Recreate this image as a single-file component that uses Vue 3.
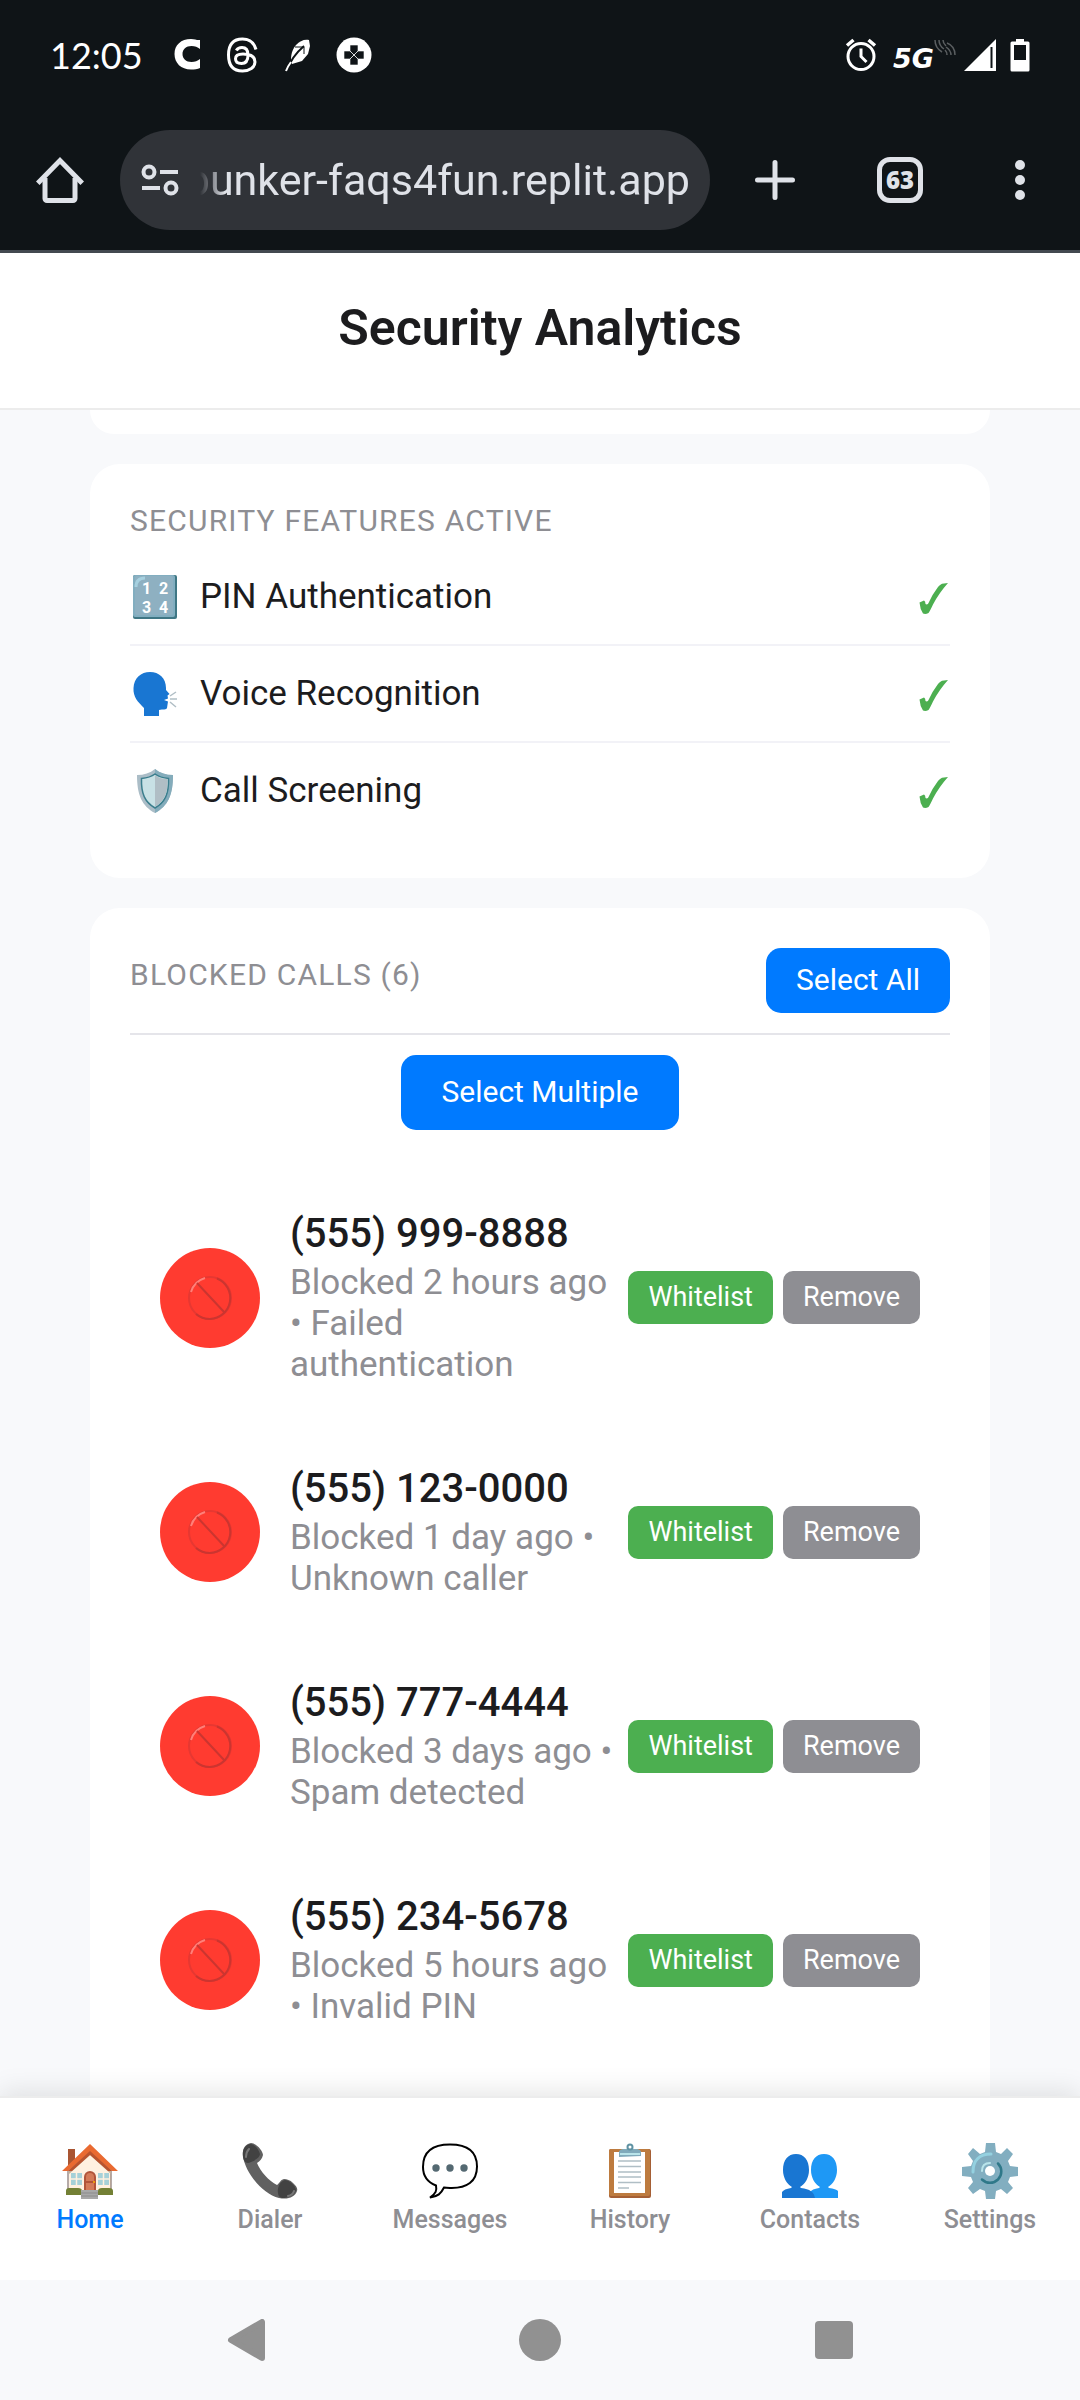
<script setup>
const features = [
  { id: 'pin', label: 'PIN Authentication' },
  { id: 'voice', label: 'Voice Recognition' },
  { id: 'shield', label: 'Call Screening' },
]

const calls = [
  { number: '(555) 999-8888', detail: 'Blocked 2 hours ago • Failed authentication' },
  { number: '(555) 123-0000', detail: 'Blocked 1 day ago • Unknown caller' },
  { number: '(555) 777-4444', detail: 'Blocked 3 days ago • Spam detected' },
  { number: '(555) 234-5678', detail: 'Blocked 5 hours ago • Invalid PIN' },
]

const tabs = ['Home', 'Dialer', 'Messages', 'History', 'Contacts', 'Settings']
</script>

<template>
  <div class="screen">
    <div class="status-bar">
      <div class="status-left">
        <span class="clock">12:05</span>
        <svg width="28" height="36" viewBox="0 0 28 36" aria-hidden="true">
          <path d="M27 4V13c-2.500-2-5-3-8.500-3-5.500 0-9 3.500-9 8s3.500 8 9 8c3.500 0 6-1 8.500-3v9c-2.500 1-5.500 1.500-9 1.500C8 33.500 1.500 27 1.500 18S8 3 18 3c4 0 6 1.500 9 1z" transform="translate(0 -1)" fill="#fff" />
        </svg>
        <svg width="32" height="36" viewBox="0 0 32 36" fill="none" stroke="#fff" stroke-width="3" aria-hidden="true">
          <path d="M30 12.500C28 5.500 23.500 2 16.500 2 7 2 2.500 8 2.500 18s4.500 16 14 16c7 0 12.500-3.500 12.500-9 0-5.500-5-8-12-8-5 0-7.500 1.800-7.500 4.800s2.500 4.700 6 4.700c4.500 0 6.500-3 6.500-8.500 0-5-1.800-7.500-6-7.500-2.800 0-4.500 1-5.700 3" />
        </svg>
        <svg width="28" height="36" viewBox="0 0 28 36" aria-hidden="true">
          <path d="M26 3 27 9 25 17 19 24 9 27C7 22 8 14 13 8 17 4 21 2 26 3z" fill="#fff" />
          <path d="M21 9C14 15 8 22 4 33" fill="none" stroke="#0f1417" stroke-width="2" />
          <path d="M8 25Q5 29 3 34" fill="none" stroke="#fff" stroke-width="2" />
          <path d="M12 10h9v7" fill="none" stroke="#0f1417" stroke-width="1" />
        </svg>
        <svg width="36" height="36" viewBox="0 0 36 36" aria-hidden="true">
          <circle cx="18" cy="18" r="17.500" fill="#fff" />
          <path d="M14 8h8v6l-4 4-4-4zM14 28h8v-6l-4-4-4 4zM8 14v8h6l4-4-4-4zM28 14v8h-6l-4-4 4-4z" fill="#0f1417" stroke="#fff" stroke-width=".6" />
        </svg>
      </div>
      <div class="status-right">
        <svg class="alarm" width="32" height="34" viewBox="0 0 32 34" fill="none" stroke="#fff" aria-hidden="true">
          <circle cx="16" cy="18.500" r="13" stroke-width="3" />
          <path d="M2 7.500 8.500 2M30 7.500 23.500 2" stroke-width="3.500" />
          <path d="M16 10.500v8l5.500 5.500" stroke-width="3" />
        </svg>
        <span class="network">5G</span>
        <svg class="waves" width="22" height="34" viewBox="0 0 22 34" fill="none" stroke="#5a5e60" stroke-width="1.500" aria-hidden="true">
          <path d="M1 2c0 5 2 9 7 12M5 2c0 4 2 7 5 9M9 2c0 3 1 4 3 6M13 5c5 2 8 6 8 12M12 9c3 2 5 4 5 8M11 12c1 1 2 2 2 5" />
        </svg>
        <svg class="signal" width="32" height="34" viewBox="0 0 32 34" aria-hidden="true">
          <path d="M0 33 32 1v32z" fill="#fff" />
          <path d="M27.500 9v21" stroke="#0f1417" stroke-width="2" />
        </svg>
        <svg width="20" height="34" viewBox="0 0 20 34" aria-hidden="true">
          <path d="M6 1h8v2.500h4a1.500 1.500 0 0 1 1.500 1.500v27a1.500 1.500 0 0 1-1.500 1.500H2A1.500 1.500 0 0 1 .5 32V5A1.500 1.500 0 0 1 2 3.500h4z" fill="#fff" />
          <path d="M4 7h12v15H4z" fill="#0f1417" />
        </svg>
      </div>
    </div>

    <div class="toolbar">
      <button class="tool home" aria-label="Home page">
        <svg width="48" height="48" viewBox="0 0 48 48" fill="none" stroke="#dfe2e8" stroke-width="5" stroke-linejoin="round" aria-hidden="true">
          <path d="M3.500 25.500 24 4.500l20.500 21" stroke-linecap="square" stroke-linejoin="miter" />
          <path d="M9 22v20.500a2 2 0 0 0 2 2h26a2 2 0 0 0 2-2V22" />
        </svg>
      </button>
      <div class="address">
        <svg width="40" height="34" viewBox="0 0 40 34" fill="none" stroke="#dfe2e8" stroke-width="4" aria-hidden="true">
          <circle cx="9" cy="9" r="5.500" /><path d="M20 9h18M2 25h18" /><circle cx="31" cy="25" r="5.500" />
        </svg>
        <div class="url"><span>bunker-faqs4fun.replit.app</span></div>
      </div>
      <button class="tool add" aria-label="New tab">
        <svg width="40" height="40" viewBox="0 0 40 40" stroke="#dfe2e8" stroke-width="5" stroke-linecap="round" aria-hidden="true">
          <path d="M20 2.500v35M2.500 20h35" />
        </svg>
      </button>
      <button class="tool"><span class="tab-count">63</span></button>
      <button class="tool" aria-label="Menu">
        <svg width="12" height="42" viewBox="0 0 12 42" fill="#dfe2e8" aria-hidden="true">
          <circle cx="6" cy="6" r="5" /><circle cx="6" cy="21" r="5" /><circle cx="6" cy="36" r="5" />
        </svg>
      </button>
    </div>

    <header class="app-header"><h1>Security Analytics</h1></header>

    <main>
      <div class="card previous"></div>
      <section class="card">
        <h2>Security Features Active</h2>
        <ul class="features">
          <li v-for="f in features" :key="f.id">
            <svg v-if="f.id === 'pin'" width="50" height="50" viewBox="0 0 50 50" aria-hidden="true">
              <rect x="3" y="3" width="44" height="44" rx="2" fill="#3f7684" />
              <rect x="3" y="3" width="42" height="42" rx="2" fill="#82aec0" />
              <rect x="5" y="4" width="38" height="39" rx="2" fill="#8eb0c1" />
              <path d="M6 15c0-6 3-9 9-9" fill="none" stroke="#a6d0df" stroke-width="3" />
              <g fill="#fff" class="digits"><text x="12" y="22">1</text><text x="29" y="22">2</text><text x="12" y="41">3</text><text x="29" y="41">4</text></g>
            </svg>
            <svg v-else-if="f.id === 'voice'" width="50" height="50" viewBox="0 0 50 50" aria-hidden="true">
              <path d="M14 47V39C8 33 3 28 3.500 19 4 9 11 3 20 3s16 6 16 16v2l3.500 4-2 1.500.5 3-4 1.500 4 1.500-1 6.500c-.5 2-4 1-8 2v6z" fill="#1976d2" />
              <path d="m40 27 6-4M40 30h7M40 33l6 5" stroke="#b0bec5" stroke-width="1.500" />
            </svg>
            <svg v-else width="50" height="50" viewBox="0 0 50 50" aria-hidden="true">
              <path d="M25 3c5 4 11 6 18 6 0 20-5 31-18 38C12 40 7 29 7 9c7 0 13-2 18-6z" fill="#abbdc7" />
              <path d="M25 3c5 4 11 6 18 6 0 20-5 31-18 38z" fill="#84acbb" />
              <path d="M25 8c4 3 8 4 13.500 4.500C39 28 35 36 25 42 15 36 11 28 11.500 12.500 17 12 21 11 25 8z" fill="#c8e1e5" stroke="#3b7e8d" stroke-width="1.500" />
              <path d="M25 9c4 3 8 4 12.500 4C38 28 34 35 25 41z" fill="#b0bec5" />
            </svg>
            <span class="feature-name">{{ f.label }}</span>
            <svg width="32" height="34" viewBox="0 0 32 34" role="img" aria-label="Active">
              <path d="M30 3 24 3.800Q22 4.500 20 7 14.500 14 10 24L8.500 24.500 7.500 24Q7.500 21 6 20.500L1.500 22.500Q2 29 5 33.500 7.500 34.500 10.500 33 12 31 15 24.500 21 13 30 3z" fill="#4caf50" />
            </svg>
          </li>
        </ul>
      </section>

      <section class="card blocked">
        <div class="blocked-head">
          <h2>Blocked Calls (6)</h2>
          <button class="primary">Select All</button>
        </div>
        <div class="multi"><button class="primary large">Select Multiple</button></div>
        <ul>
          <li v-for="c in calls" :key="c.number" class="call">
            <span class="avatar">
              <svg width="46" height="46" viewBox="0 0 46 46" fill="none" aria-hidden="true">
                <circle cx="23" cy="23" r="21" stroke="#e63832" stroke-width="2" />
                <path d="M30 3.500A21 21 0 0 1 23 44 21 21 0 0 1 9 39" stroke="#cb3530" stroke-width="2" />
                <path d="M4 17A21 21 0 0 1 18 3" stroke="#ff8079" stroke-width="2" />
                <path d="m10 8 28 30" stroke="#cb3530" stroke-width="2" />
              </svg>
            </span>
            <div class="info">
              <h3>{{ c.number }}</h3>
              <p>{{ c.detail }}</p>
            </div>
            <div class="actions">
              <button class="allow">Whitelist</button>
              <button class="remove">Remove</button>
            </div>
          </li>
        </ul>
      </section>
    </main>

    <nav class="tabs">
      <a v-for="(t, i) in tabs" :key="t" href="#" :class="{ active: i === 0 }">
        <svg width="56" height="56" viewBox="0 0 56 56" aria-hidden="true">
          <g v-if="t === 'Home'">
            <path d="M6 6h7v16H6z" fill="#a95532" />
            <path d="M7 24 28 7l21 17v27H7z" fill="#fff1e0" />
            <path d="M6 25v25M49 25v25" stroke="#6d5751" stroke-width="1" />
            <path d="m6 25 22-17 21 17v6L28 12 7 31z" fill="#c5ae98" />
            <path d="M28 1 56 28h-6L28 9 6 28H0z" fill="#e96a31" />
            <path d="m6 28 22-20 22 20h-4L28 12 10 28z" fill="#b9532e" />
            <path d="M9 30h11v12H9zM36 30h11v12H36z" fill="#a6d1d8" />
            <path d="M14.500 30v12M9 36h11M41.500 30v12M36 36h11" stroke="#fff1e0" stroke-width="1.500" />
            <path d="M22 49V34a6 6 0 0 1 12 0v15z" fill="#b15439" />
            <path d="M24 38v-4a4 4 0 0 1 8 0v4zM24 40h8v7h-8z" fill="#d47b58" />
            <circle cx="32" cy="39" r="1" fill="#ffb300" />
            <path d="M4 52v-4q0-3 3-3h9q4 0 4 3v4zM36 52v-4q0-3 4-3h7q4 0 4 3v4z" fill="#738035" />
            <path d="M19 47h17v9H19z" fill="#a8a8a8" />
            <path d="M19 50h17M19 53h17" stroke="#8c8c8c" stroke-width="1" />
          </g>
          <g v-else-if="t === 'Dialer'">
            <path d="M9 0C3 1 0 6 1 13c2 16 19 38 36 42 9 2 16-1 18-7 1-3-1-5-4-8-3-3-6-4-9-4-4 1-4 4-7 6C27 38 18 28 15 20c3-2 5-4 6-8C21 8 14 0 9 0z" fill="#616161" />
            <path d="M8 1C3 2 0 7 1 14c1 6 4 7 8 5 5-2 9-5 9-8C17 7 13 1 8 1zM36 50c-1-5 2-12 7-13 4 0 11 6 11 10-1 6-8 8-14 8q-4-1-4-5z" fill="#424242" />
            <path d="M4 14c0-4 1-6 3-8M46 53q5-1 6-5" fill="none" stroke="#777" stroke-width="2" stroke-linecap="round" />
          </g>
          <g v-else-if="t === 'Messages'">
            <path d="M28 1.500c18 0 27 8 27 22 0 15-10 22-27 21.500-2-.1-4-.2-6-.5-3 6-6 9-14 10 6-4 7-7 6-12C5 39 1 33 1 24 1 9 10 1.500 28 1.500z" fill="#fff" stroke="#000" stroke-width="2" />
            <g fill="#546972"><circle cx="14" cy="25" r="3.700" /><circle cx="28" cy="25" r="3.700" /><circle cx="42" cy="25" r="3.700" /></g>
          </g>
          <g v-else-if="t === 'History'">
            <rect x="7" y="6" width="42" height="49" rx="2" fill="#a55f35" />
            <rect x="7" y="6" width="41" height="47" rx="2" fill="#bd7b3f" />
            <path d="M12 9h31v41H12z" fill="#fff" />
            <path d="M16 18h23M16 23.500h23M16 29h23M16 34h23M16 39.500h23M16 45h11" stroke="#b0bec5" stroke-width="1.500" />
            <path d="M17 14V9q0-2 4-3h3q2 0 2-3a2 2 0 0 1 4 0q0 3 2 3h3q4 1 4 3v4z" fill="#80aabb" />
            <path d="M18 11h20" stroke="#b9e4ea" stroke-width="2" />
            <circle cx="28" cy="4" r="2.500" fill="#fff" stroke="#5f92a3" stroke-width="2" />
          </g>
          <g v-else-if="t === 'Contacts'">
            <path d="M28 55V49q2-3 9-4l1-1c-5-3-9-9-9-17 0-10 5-16 13-16s13 6 13 16c0 8-4 14-9 17l1 1q7 1 9 3v7z" fill="#1e98f5" />
            <path d="M0 55V49q2-3 9-4l1-1C5 41 1 35 1 27 1 17 6 11 14 11s13 6 13 16c0 8-4 14-9 17l1 1c9 1 13 4 14 10z" fill="#1976d2" />
          </g>
          <g v-else>
            <path d="m24 0-1 9-5 2-7-6-5 6 5 7-2 5-9 1v9l9 1 2 5-5 6 5 6 7-5 5 2 1 8h9l1-8 5-2 6 5 6-6-5-6 2-5 8-1v-9l-8-1-2-5 5-7-6-6-6 6-5-2-1-9z" fill="#82aec0" />
            <path d="M36 20.500A11 11 0 0 1 20 36.500" fill="none" stroke="#2f7889" stroke-width="2.500" stroke-linecap="round" />
            <path d="M11 29C11 18 17 11 29 11" fill="none" stroke="#94d1e0" stroke-width="3" stroke-linecap="round" />
            <path d="M20 28c0-5 3-8 8-8" fill="none" stroke="#b9e4ea" stroke-width="2" stroke-linecap="round" />
            <circle cx="28" cy="28" r="5" fill="#fff" />
          </g>
        </svg>
        <span>{{ t }}</span>
      </a>
    </nav>

    <div class="system-bar">
      <button aria-label="Back">
        <svg width="42" height="42" viewBox="0 0 42 42" aria-hidden="true"><path d="M37 3v36L6 21z" fill="#919191" stroke="#919191" stroke-width="6" stroke-linejoin="round" /></svg>
      </button>
      <button aria-label="Home">
        <svg width="42" height="42" viewBox="0 0 42 42" aria-hidden="true"><circle cx="21" cy="21" r="21" fill="#919191" /></svg>
      </button>
      <button aria-label="Recent apps">
        <svg width="42" height="42" viewBox="0 0 42 42" aria-hidden="true"><rect x="2" y="2" width="38" height="38" rx="4" fill="#919191" /></svg>
      </button>
    </div>
  </div>
</template>

<style>
body {
  margin: 0;
  background: #f8f9fb;
}
</style>

<style scoped>
.screen {
  display: flex;
  flex-direction: column;
  height: 100vh;
  color: #1c1c1e;
  background: #f8f9fb;
  font-family: Roboto, "Liberation Sans", sans-serif;
}
* {
  box-sizing: border-box;
}
h1, h2, h3, p, ul {
  margin: 0;
  padding: 0;
}
ul {
  list-style: none;
}
svg {
  display: block;
  flex: none;
}
button {
  margin: 0;
  padding: 0;
  border: 0;
  background: none;
  font-family: inherit;
  color: #fff;
}
.status-bar {
  display: flex;
  justify-content: space-between;
  align-items: center;
  flex: none;
  height: 110px;
  padding: 0 50px;
  color: #fff;
  background: #0f1417;
}
.status-left, .status-right {
  display: flex;
  align-items: center;
}
.status-left {
  gap: 25px;
}
.clock {
  width: 98px;
  font: 36px/46px Lato, sans-serif;
}
.alarm {
  margin-right: 16px;
}
.network {
  padding-top: 8px;
  font: italic 700 27px/36px "DejaVu Sans", sans-serif;
}
.signal {
  margin: 0 14px 0 8px;
}
.toolbar {
  display: flex;
  align-items: center;
  flex: none;
  height: 143px;
  border-bottom: 3px solid #434950;
  background: #0f1417;
}
.tool {
  display: flex;
  justify-content: center;
  align-items: center;
  width: 120px;
  height: 100px;
}
.tool.add {
  width: 130px;
}
.address {
  display: flex;
  align-items: center;
  flex: 1;
  min-width: 0;
  height: 100px;
  padding: 0 20px;
  gap: 20px;
  border-radius: 50px;
  background: #303338;
}
.url {
  display: flex;
  justify-content: flex-end;
  flex: 1;
  min-width: 0;
  overflow: hidden;
  font-size: 43px;
  line-height: 56px;
  white-space: nowrap;
  color: #dfe2e8;
  mask-image: linear-gradient(to right, transparent, #000 25px);
}
.tab-count {
  width: 46px;
  height: 46px;
  border: 5px solid #dfe2e8;
  border-radius: 13px;
  font: 800 24px/36px "Open Sans", sans-serif;
  text-align: center;
  color: #dfe2e8;
}
.app-header {
  flex: none;
  padding: 45px 40px 50px;
  border-bottom: 2px solid #ececec;
  background: #fff;
  text-align: center;
}
h1 {
  font-size: 50px;
  font-weight: 600;
  line-height: 60px;
}
main {
  display: flex;
  flex-direction: column;
  flex: 1;
  gap: 30px;
  min-height: 0;
  padding: 0 90px;
  overflow: hidden;
}
.card {
  flex: none;
  padding: 40px;
  border-radius: 30px;
  background: #fff;
}
.previous {
  height: 24px;
  padding: 0;
  border-radius: 0 0 30px 30px;
}
.blocked {
  flex: 1 0 auto;
  padding-bottom: 0;
  border-radius: 30px 30px 0 0;
}
h2 {
  margin-bottom: 12px;
  font-size: 30px;
  font-weight: 400;
  line-height: 33px;
  letter-spacing: 0.04em;
  text-transform: uppercase;
  color: #8e8e93;
}
.features li {
  display: flex;
  align-items: center;
  height: 97px;
  border-bottom: 2px solid #f2f2f7;
}
.features li:last-child {
  height: 95px;
  border-bottom: 0;
}
.feature-name {
  flex: 1;
  padding-left: 20px;
  font-size: 35px;
  line-height: 41px;
}
.digits {
  font: 700 16px Roboto, sans-serif;
}
.blocked-head {
  display: flex;
  justify-content: space-between;
  align-items: center;
  padding-bottom: 20px;
  border-bottom: 2px solid #e5e5ea;
}
.primary {
  padding: 14px 30px 16px;
  border-radius: 15px;
  font-size: 30px;
  line-height: 35px;
  background: #007aff;
}
.primary.large {
  padding: 19px 40px 21px;
}
.multi {
  display: flex;
  justify-content: center;
  padding: 20px 0 40px;
}
.call {
  display: flex;
  align-items: center;
  padding: 40px 30px;
}
.avatar {
  display: flex;
  justify-content: center;
  align-items: center;
  flex: none;
  width: 100px;
  height: 100px;
  margin-right: 30px;
  border-radius: 50%;
  background: #ff3b30;
}
.info {
  flex: 1;
  min-width: 0;
}
h3 {
  margin-bottom: 5px;
  font-size: 40px;
  font-weight: 500;
  line-height: 47px;
}
.info p {
  font-size: 35px;
  line-height: 41px;
  color: #8e8e93;
}
.actions {
  display: flex;
  gap: 10px;
  margin-left: 10px;
}
.actions button {
  padding: 10px 20px;
  border-radius: 10px;
  font-size: 27px;
  line-height: 33px;
}
.allow {
  background: #4caf50;
}
.remove {
  background: #8e8e93;
}
.tabs {
  position: relative;
  display: flex;
  flex: none;
  padding: 45px 0;
  border-top: 2px solid #ececec;
  background: #fff;
  box-shadow: 0 -5px 25px rgba(0, 0, 0, 0.1);
}
.tabs a {
  display: flex;
  flex-direction: column;
  align-items: center;
  flex: 1;
  gap: 6px;
  font-size: 25px;
  font-weight: 500;
  line-height: 30px;
  text-decoration: none;
  color: #8e8e93;
}
.tabs .active {
  color: #007aff;
}
.system-bar {
  position: relative;
  display: flex;
  justify-content: center;
  align-items: center;
  flex: none;
  gap: 252px;
  height: 120px;
  background: #f8f9fb;
}
</style>
